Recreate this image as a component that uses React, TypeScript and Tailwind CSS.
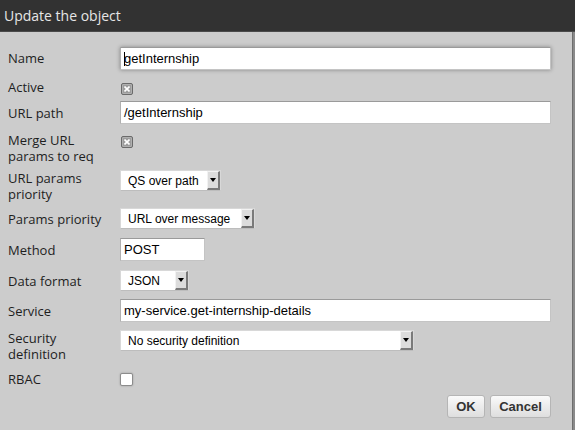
import React from 'react';

const labelCls = "w-[112px] shrink-0 text-[13px] leading-[16px] text-[#1e1e1e] font-['Open_Sans',sans-serif]";
const inputCls = "h-[23px] bg-white border border-[#c4c4c4] border-t-[#9a9a9a] border-l-[#b0b0b0] pl-[3px] flex items-center text-[13px] text-black font-['Liberation_Sans',Arial,sans-serif]";

function Checked() {
  return (
    <div className="w-[12px] h-[12px] rounded-[2px] border border-[#6a6a6a] bg-[#9c9c9c] flex items-center justify-center shadow-[inset_0_0_0_1px_#b0b0b0]">
      <svg width="6" height="6" viewBox="0 0 6 6">
        <path d="M0.5 0.5 L5.5 5.5 M5.5 0.5 L0.5 5.5" stroke="#fff" strokeWidth="1.6" />
      </svg>
    </div>
  );
}

function Select({ value, width }: { value: string; width: string }) {
  return (
    <div className={`${width} h-[21px] bg-white border border-[#d8d8d8] border-b-[#bdbdbd] flex items-stretch`}>
      <div className="flex-1 pl-[7px] flex items-center text-[12px] text-black font-['Liberation_Sans',Arial,sans-serif] whitespace-nowrap overflow-hidden">
        {value}
      </div>
      <div className="w-[13px] bg-[#dcdcdc] border-l border-t border-l-[#f2f2f2] border-t-[#f2f2f2] border-r-2 border-b-2 border-r-[#7a7a7a] border-b-[#7a7a7a] flex items-center justify-center">
        <svg width="6" height="4" viewBox="0 0 6 4">
          <path d="M0 0 H6 L3 4 Z" fill="#000" />
        </svg>
      </div>
    </div>
  );
}

export default function App() {
  return (
    <div className="w-[575px] h-[430px] bg-[#8a8a8a] flex flex-col overflow-hidden">
      <div className="h-[32px] bg-[#323232] border-b border-[#4a4a4a] flex items-center pl-[4px] shrink-0">
        <span className="text-[14px] text-[#e6e6e6] font-['Open_Sans',sans-serif]">Update the object</span>
      </div>
      <div className="w-[573px] flex-1 bg-[#cccccc] border-r border-[#6e6e6e] pl-[8px] pr-[21px] pt-[15px] flex flex-col">
        {/* Name */}
        <div className="flex items-start">
          <div className={`${labelCls} pt-[3px]`}>Name</div>
          <div className={`${inputCls} flex-1 shadow-[0_0_4px_rgba(0,0,0,0.35)]`}>
            <span className="w-px h-[14px] bg-black mr-[-1px]" />
            getInternship
          </div>
        </div>
        {/* Active */}
        <div className="flex items-start mt-[9px]">
          <div className={labelCls}>Active</div>
          <div className="mt-[4px] ml-[1px]"><Checked /></div>
        </div>
        {/* URL path */}
        <div className="flex items-start mt-[6px]">
          <div className={`${labelCls} pt-[4px]`}>URL path</div>
          <div className={`${inputCls} flex-1`}>/getInternship</div>
        </div>
        {/* Merge */}
        <div className="flex items-start mt-[8px]">
          <div className={labelCls}>Merge URL<br />params to req</div>
          <div className="mt-[4px] ml-[1px]"><Checked /></div>
        </div>
        {/* URL params priority */}
        <div className="flex items-start mt-[6px]">
          <div className={labelCls}>URL params<br />priority</div>
          <Select value="QS over path" width="w-[101px]" />
        </div>
        {/* Params priority */}
        <div className="flex items-start mt-[6px]">
          <div className={`${labelCls} pt-[3px]`}>Params priority</div>
          <Select value="URL over message" width="w-[135px]" />
        </div>
        {/* Method */}
        <div className="flex items-start mt-[9px]">
          <div className={`${labelCls} pt-[4px]`}>Method</div>
          <div className={`${inputCls} w-[85px]`}>POST</div>
        </div>
        {/* Data format */}
        <div className="flex items-start mt-[9px]">
          <div className={`${labelCls} pt-[3px]`}>Data format</div>
          <Select value="JSON" width="w-[69px]" />
        </div>
        {/* Service */}
        <div className="flex items-start mt-[8px]">
          <div className={`${labelCls} pt-[4px]`}>Service</div>
          <div className={`${inputCls} flex-1`}>my-service.get-internship-details</div>
        </div>
        {/* Security definition */}
        <div className="flex items-start mt-[8px]">
          <div className={labelCls}>Security<br />definition</div>
          <Select value="No security definition" width="w-[294px]" />
        </div>
        {/* RBAC */}
        <div className="flex items-start mt-[9px]">
          <div className={labelCls}>RBAC</div>
          <div className="mt-[2px] w-[13px] h-[13px] rounded-[2px] bg-white border border-[#8c8c8c] shadow-[0_0_2px_rgba(0,0,0,0.25)]" />
        </div>
        {/* Buttons */}
        <div className="flex justify-end gap-[5px] mt-[8px]">
          <button className="w-[38px] h-[23px] rounded-[3px] border border-[#b5b5b5] bg-gradient-to-b from-[#fafafa] to-[#dedede] text-[13px] font-bold text-[#333] font-['Liberation_Sans',Arial,sans-serif]">OK</button>
          <button className="w-[61px] h-[23px] rounded-[3px] border border-[#b5b5b5] bg-gradient-to-b from-[#fafafa] to-[#dedede] text-[13px] font-bold text-[#333] font-['Liberation_Sans',Arial,sans-serif]">Cancel</button>
        </div>
      </div>
    </div>
  );
}
